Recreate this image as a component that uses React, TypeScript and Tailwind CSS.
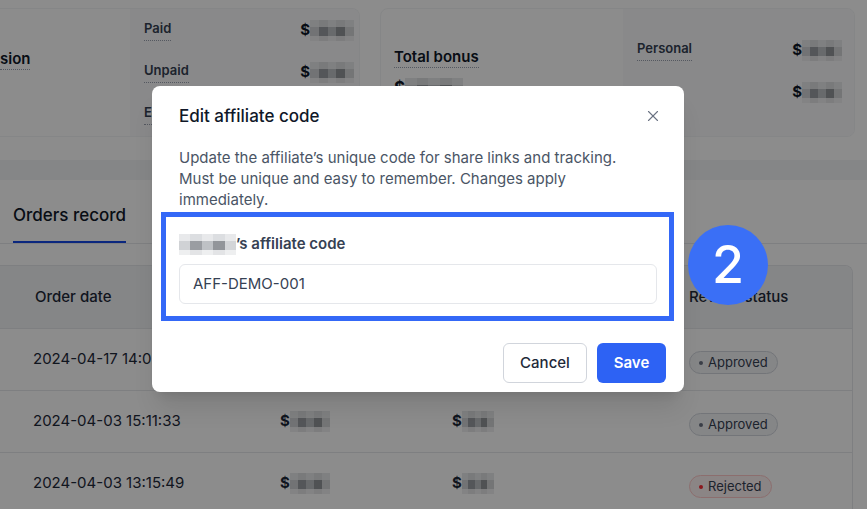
import React from 'react';
import { X } from 'lucide-react';

const Blur = ({ w = 56 }: { w?: number }) => {
  const shades = ['bg-[#d0d2d5]', 'bg-[#9a9da2]', 'bg-[#bec1c5]', 'bg-[#92959a]', 'bg-[#d3d5d8]'];
  return (
    <span className="inline-flex flex-col" style={{ width: w }}>
      <span className="flex h-[7px] w-full">
        {shades.map((s, i) => (
          <span key={i} className={`flex-1 ${i % 2 ? 'bg-[#dcdee1]' : 'bg-[#e8e9eb]'}`} />
        ))}
      </span>
      <span className="flex h-[9px] w-full">
        {shades.map((s, i) => (
          <span key={i} className={`flex-1 ${s}`} />
        ))}
      </span>
      <span className="flex h-[5px] w-full">
        {shades.map((s, i) => (
          <span key={i} className={`flex-1 ${i % 2 ? 'bg-[#e3e4e6]' : 'bg-[#eeeff0]'}`} />
        ))}
      </span>
    </span>
  );
};

const Amount = ({ w = 48 }: { w?: number }) => (
  <div className="flex items-center text-[15px] font-bold text-gray-900">
    <span>$</span>
    <Blur w={w} />
  </div>
);

const Label = ({ children, big = false }: { children: React.ReactNode; big?: boolean }) => (
  <span
    className={`border-b border-dotted border-gray-400 pb-[1px] font-semibold ${
      big ? 'text-[15px] text-gray-900' : 'text-[13px] text-gray-700'
    }`}
  >
    {children}
  </span>
);

const Status = ({ rejected = false }: { rejected?: boolean }) => (
  <span
    className={`inline-flex h-[23px] items-center gap-[5px] rounded-full border px-[9px] text-[13px] ${
      rejected ? 'border-red-200 bg-red-50 text-gray-700' : 'border-gray-300 bg-gray-100 text-gray-700'
    }`}
  >
    <span className={`h-[4px] w-[4px] rounded-full ${rejected ? 'bg-red-500' : 'bg-gray-500'}`} />
    {rejected ? 'Rejected' : 'Approved'}
  </span>
);

const orders = [
  { date: '2024-04-17 14:02:18', status: 'ok' },
  { date: '2024-04-03 15:11:33', status: 'ok' },
  { date: '2024-04-03 13:15:49', status: 'rejected' },
];

export default function App() {
  return (
    <div
      className="relative h-[509px] w-[867px] overflow-hidden bg-gray-100"
      style={{ fontFamily: 'Inter, "Liberation Sans", sans-serif' }}
    >
      {/* Summary cards */}
      <div className="flex h-[160px] gap-5 bg-white pt-2">
        <div className="flex h-[129px] w-[360px] overflow-hidden rounded-r-lg border border-l-0 border-gray-100">
          <div className="flex w-[130px] items-center">
            <div className="-mt-[28px]">
              <Label big>sion</Label>
            </div>
          </div>
          <div className="flex flex-1 flex-col bg-gray-50 pl-[14px] pr-[5px]">
            <div className="flex h-[42px] items-center justify-between">
              <Label>Paid</Label>
              <Amount w={44} />
            </div>
            <div className="flex h-[42px] items-center justify-between">
              <Label>Unpaid</Label>
              <Amount w={44} />
            </div>
            <div className="flex h-[42px] items-center justify-between">
              <Label>Earned</Label>
              <Amount w={44} />
            </div>
          </div>
        </div>
        <div className="flex h-[129px] w-[475px] overflow-hidden rounded-lg border border-gray-100">
          <div className="flex w-[242px] flex-col justify-center gap-[8px] pl-[13px]">
            <div>
              <Label big>Total bonus</Label>
            </div>
            <div className="flex items-center text-[17px] font-bold text-gray-900">
              <span>$</span>
              <Blur w={58} />
            </div>
          </div>
          <div className="flex flex-1 flex-col bg-gray-50 pl-[14px] pr-[12px] pt-[20px]">
            <div className="flex h-[42px] items-center justify-between">
              <Label>Personal</Label>
              <Amount w={40} />
            </div>
            <div className="flex h-[42px] items-center justify-end">
              <Amount w={40} />
            </div>
          </div>
        </div>
      </div>

      {/* Orders */}
      <div className="mt-[20px] bg-white">
        <div className="flex border-b border-gray-200 pl-[13px] pt-[23px]">
          <div className="border-b-2 border-blue-700 pb-[14px] text-[17px] font-medium leading-6 text-gray-900">
            Orders record
          </div>
        </div>
        <div className="mt-[21px] w-[853px] overflow-hidden rounded-tr-lg border-r border-t border-gray-200">
          <div className="grid h-[62px] grid-cols-[280px_172px_237px_1fr] items-center bg-gray-100 text-[15px] font-medium text-gray-800">
            <div className="pl-[35px]">Order date</div>
            <div>Amount</div>
            <div>Bonus</div>
            <div>Review status</div>
          </div>
          {orders.map((o) => (
            <div
              key={o.date}
              className="grid h-[62px] grid-cols-[280px_172px_237px_1fr] items-center border-t border-gray-200 text-[15px] text-gray-800"
            >
              <div className="pl-[33px]">{o.date}</div>
              <div className="flex items-center text-[15px] font-bold">
                $<Blur w={40} />
              </div>
              <div className="flex items-center text-[15px] font-bold">
                $<Blur w={32} />
              </div>
              <div className="pt-[4px]">
                <Status rejected={o.status === 'rejected'} />
              </div>
            </div>
          ))}
        </div>
      </div>

      {/* Backdrop */}
      <div className="absolute inset-0 bg-black/45" />

      {/* Dialog */}
      <div className="absolute left-[152px] top-[86px] flex h-[306px] w-[532px] flex-col rounded-lg bg-white shadow-xl">
        <div className="flex items-center justify-between pl-[27px] pr-[22px] pt-[18px]">
          <h2 className="text-[17px] font-medium leading-6 text-gray-900">Edit affiliate code</h2>
          <X size={18} strokeWidth={1.5} className="text-gray-500" />
        </div>
        <p className="mt-[19px] max-w-[482px] pl-[27px] text-[15px] leading-[21px] text-gray-600">
          Update the affiliate’s unique code for share links and tracking. Must be unique and easy to
          remember. Changes apply immediately.
        </p>
        <div className="mt-[23px] px-[27px]">
          <div className="flex items-center text-[15px] font-semibold leading-[22px] text-gray-700">
            <Blur w={57} />
            <span>’s affiliate code</span>
          </div>
          <div className="mt-[9px] flex h-[40px] items-center rounded-md border border-gray-200 px-[13px] text-[15px] text-gray-700">
            AFF-DEMO-001
          </div>
        </div>
        <div className="mt-[39px] flex justify-end gap-[10px] pr-[18px]">
          <button className="h-[40px] w-[84px] rounded-md border border-gray-300 bg-white text-[15px] font-medium text-gray-800">
            Cancel
          </button>
          <button className="h-[40px] w-[69px] rounded-md bg-[#2d62f4] text-[15px] font-semibold text-white">
            Save
          </button>
        </div>
        {/* highlight */}
        <div className="absolute left-[9px] top-[126px] h-[109px] w-[513px] border-[5px] border-[#3468f7]" />
      </div>

      {/* Step marker */}
      <div className="absolute left-[688px] top-[225px] flex h-[80px] w-[80px] items-center justify-center rounded-full bg-[#3a6ff6] text-[52px] font-medium leading-none text-white">
        2
      </div>
    </div>
  );
}
